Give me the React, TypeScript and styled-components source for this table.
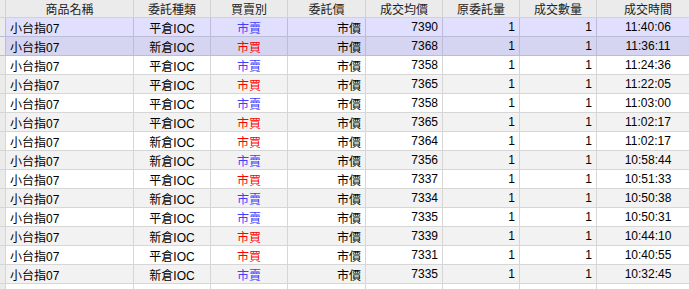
import React from 'react'
import styled, { createGlobalStyle } from 'styled-components';

const GlobalStyle = createGlobalStyle`
    html, body {
        margin: 0;
        padding: 0;
        background: #ffffff;
        overflow: hidden;
    }
`;

const COLUMNS = '6px 128px 77px 77px 78px 77px 77px 77px 103px';

const Table = styled.div`
    width: 689px;
    height: 289px;
    overflow: hidden;
    font-family: "Liberation Sans", "Noto Sans CJK TC", Arial, sans-serif;
    font-size: 12px;
    color: #000;
    background: #fff;
`;
const Row = styled.div<{ $bg: string; $line: string }>`
    display: grid;
    grid-template-columns: ${COLUMNS};
    width: 700px;
    height: 19px;
    background: ${p => p.$bg};
    & > div {
        border-right: 1px solid ${p => p.$line};
        border-bottom: 1px solid ${p => p.$line};
    }
`;
const HeaderRow = styled.div`
    display: grid;
    grid-template-columns: ${COLUMNS};
    width: 700px;
    height: 18px;
    background: #ebebeb;
`;
const HeaderCell = styled.div`
    box-sizing: border-box;
    border-right: 1px solid #d2d2d2;
    border-bottom: 1px solid #d2d2d2;
    display: flex;
    align-items: center;
    justify-content: center;
    color: #222;
    white-space: nowrap;
`;
const Stub = styled.div`
    box-sizing: border-box;
    background: #ebebeb;
`;
const Cell = styled.div<{ $align?: 'left' | 'center' | 'right'; $color?: string }>`
    box-sizing: border-box;
    display: flex;
    align-items: center;
    padding: 0 4px;
    white-space: nowrap;
    justify-content: ${p => p.$align === 'right' ? 'flex-end' : p.$align === 'center' ? 'center' : 'flex-start'};
    color: ${p => p.$color || '#000'};
`;
const Filler = styled(Row)`
    height: 10px;
`;

const headers = ['', '商品名稱', '委託種類', '買賣別', '委託價', '成交均價', '原委託量', '成交數量', '成交時間'];

const trades = [
    { type: '平倉IOC', side: '市賣', price: 7390, time: '11:40:06' },
    { type: '新倉IOC', side: '市買', price: 7368, time: '11:36:11' },
    { type: '平倉IOC', side: '市賣', price: 7358, time: '11:24:36' },
    { type: '平倉IOC', side: '市買', price: 7365, time: '11:22:05' },
    { type: '平倉IOC', side: '市賣', price: 7358, time: '11:03:00' },
    { type: '平倉IOC', side: '市買', price: 7365, time: '11:02:17' },
    { type: '新倉IOC', side: '市買', price: 7364, time: '11:02:17' },
    { type: '新倉IOC', side: '市賣', price: 7356, time: '10:58:44' },
    { type: '平倉IOC', side: '市買', price: 7337, time: '10:51:33' },
    { type: '新倉IOC', side: '市賣', price: 7334, time: '10:50:38' },
    { type: '平倉IOC', side: '市賣', price: 7335, time: '10:50:31' },
    { type: '新倉IOC', side: '市買', price: 7339, time: '10:44:10' },
    { type: '平倉IOC', side: '市買', price: 7331, time: '10:40:55' },
    { type: '新倉IOC', side: '市賣', price: 7335, time: '10:32:45' },
];

const rowColors = (idx: number) => {
    if (idx === 0) return { bg: '#e0e0fe', line: '#bcbcd8' };
    if (idx === 1) return { bg: '#d5d5f1', line: '#bcbcd8' };
    return idx % 2 === 0 ? { bg: '#ffffff', line: '#d6d6d6' } : { bg: '#f2f2f2', line: '#d6d6d6' };
};

const Trades = () => {
    return (
        <>
            <GlobalStyle />
            <Table>
                <HeaderRow>
                    {headers.map((h, idx) => <HeaderCell key={`head-` + idx}>{h}</HeaderCell>)}
                </HeaderRow>
                {trades.map((t, idx) => {
                    const c = rowColors(idx);
                    return (
                        <Row key={`trade-` + idx} $bg={c.bg} $line={c.line}>
                            <Stub />
                            <Cell>小台指07</Cell>
                            <Cell $align="center">{t.type}</Cell>
                            <Cell $align="center" $color={t.side === '市買' ? '#ff0000' : '#4040ff'}>{t.side}</Cell>
                            <Cell $align="right">市價</Cell>
                            <Cell $align="right">{t.price}</Cell>
                            <Cell $align="right">1</Cell>
                            <Cell $align="right">1</Cell>
                            <Cell $align="center">{t.time}</Cell>
                        </Row>
                    )
                })}
                <Filler $bg="#ffffff" $line="#d6d6d6">
                    {headers.map((h, idx) => idx === 0 ? <Stub key={`fill-` + idx} /> : <Cell key={`fill-` + idx} />)}
                </Filler>
            </Table>
        </>
    );
}

export default Trades;
